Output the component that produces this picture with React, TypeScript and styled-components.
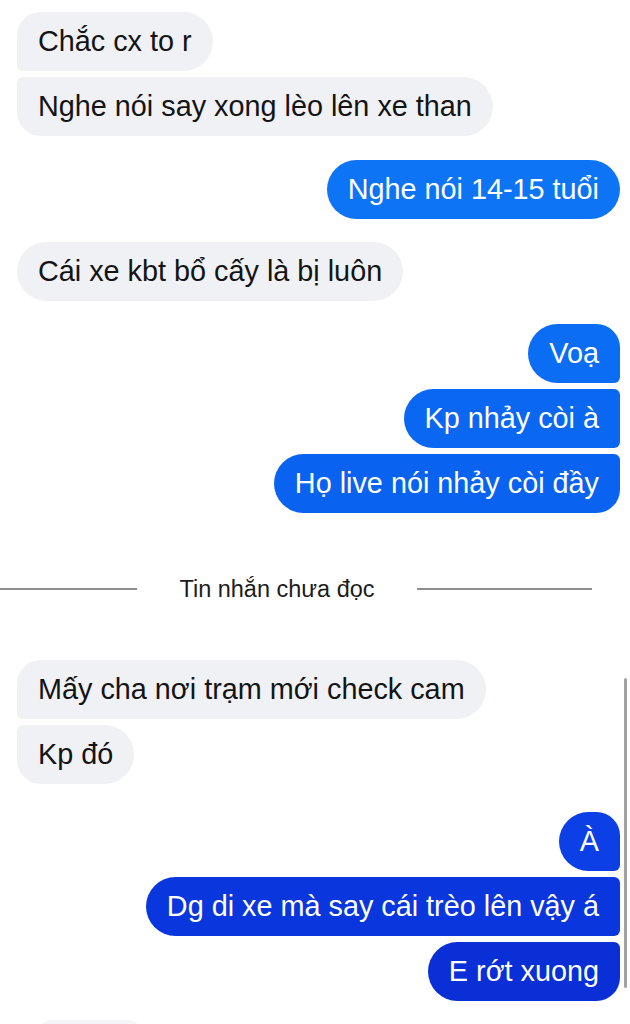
import React from "react";
import styled, { createGlobalStyle } from "styled-components";

const Global = createGlobalStyle`
  html, body { margin: 0; padding: 0; background: #ffffff; }
  body { font-family: "Liberation Sans", Arial, sans-serif; -webkit-font-smoothing: antialiased; }
`;

const Screen = styled.div`
  position: relative;
  width: 630px;
  height: 1024px;
  overflow: hidden;
  background: #ffffff;
  padding-top: 12px;
  box-sizing: border-box;
`;

const Group = styled.div<{ $side: "in" | "out"; $top: number }>`
  display: flex;
  flex-direction: column;
  align-items: ${(p) => (p.$side === "in" ? "flex-start" : "flex-end")};
  gap: 6px;
  padding: 0 10px 0 17px;
  margin-top: ${(p) => p.$top}px;
`;

type Pos = "single" | "first" | "middle" | "last";

const radius = (side: "in" | "out", pos: Pos) => {
  const full = 30;
  const outer = 24;
  const inner = 6;
  let a = full, b = full; // grouped-side top, bottom
  if (pos === "first") { a = outer; b = inner; }
  if (pos === "middle") { a = inner; b = inner; }
  if (pos === "last") { a = inner; b = outer; }
  if (side === "in") return `${a}px ${full}px ${full}px ${b}px`;
  return `${full}px ${a}px ${b}px ${full}px`;
};

const Bubble = styled.div<{ $side: "in" | "out"; $pos: Pos; $bg: string }>`
  box-sizing: border-box;
  height: 59px;
  display: flex;
  align-items: center;
  padding: 0 21px 1px 21px;
  font-size: 28.8px;
  white-space: nowrap;
  background: ${(p) => p.$bg};
  color: ${(p) => (p.$side === "in" ? "#141414" : "#ffffff")};
  border-radius: ${(p) => radius(p.$side, p.$pos)};
`;

const Divider = styled.div`
  display: flex;
  align-items: center;
  margin-top: 62px;
  margin-bottom: 57px;
  padding-right: 38px;
  height: 28px;
`;

const Line = styled.div<{ $w: number }>`
  width: ${(p) => p.$w}px;
  height: 2px;
  background: #8e8e8e;
`;

const DividerText = styled.span`
  flex: 1;
  text-align: center;
  font-size: 23.5px;
  color: #1c1c1c;
`;

const Scrollbar = styled.div`
  position: absolute;
  left: 624px;
  top: 678px;
  width: 3px;
  height: 310px;
  border-radius: 2px;
  background: #a3a3a3;
`;

const Peek = styled.div`
  position: absolute;
  left: 38px;
  top: 1020px;
  width: 104px;
  height: 30px;
  border-radius: 14px;
  background: #f4f5f7;
`;

const GRAY = "#eff1f4";

type Msg = { t: string; bg?: string };
type G = { side: "in" | "out"; top: number; msgs: Msg[] };

const groups1: G[] = [
  { side: "in", top: 0, msgs: [{ t: "Chắc cx to r" }, { t: "Nghe nói say xong lèo lên xe than" }] },
  { side: "out", top: 24, msgs: [{ t: "Nghe nói 14-15 tuổi", bg: "#0d74f6" }] },
  { side: "in", top: 23, msgs: [{ t: "Cái xe kbt bổ cấy là bị luôn" }] },
  {
    side: "out",
    top: 23,
    msgs: [
      { t: "Voạ", bg: "#0b6cf4" },
      { t: "Kp nhảy còi à", bg: "#0a67f2" },
      { t: "Họ live nói nhảy còi đầy", bg: "#0a62f0" },
    ],
  },
];

const groups2: G[] = [
  { side: "in", top: 0, msgs: [{ t: "Mấy cha nơi trạm mới check cam" }, { t: "Kp đó" }] },
  {
    side: "out",
    top: 28,
    msgs: [
      { t: "À", bg: "#0d3fe6" },
      { t: "Dg di xe mà say cái trèo lên vậy á", bg: "#0a36de" },
      { t: "E rớt xuong", bg: "#0a2fd6" },
    ],
  },
];

const posOf = (i: number, n: number): Pos =>
  n === 1 ? "single" : i === 0 ? "first" : i === n - 1 ? "last" : "middle";

const renderGroups = (gs: G[]) =>
  gs.map((g, gi) => (
    <Group key={gi} $side={g.side} $top={g.top}>
      {g.msgs.map((m, i) => (
        <Bubble key={i} $side={g.side} $pos={posOf(i, g.msgs.length)} $bg={m.bg ?? GRAY}>
          {m.t}
        </Bubble>
      ))}
    </Group>
  ));

export default function App() {
  return (
    <>
      <Global />
      <Screen>
        {renderGroups(groups1)}
        <Divider>
          <Line $w={137} />
          <DividerText>Tin nhắn chưa đọc</DividerText>
          <Line $w={175} />
        </Divider>
        {renderGroups(groups2)}
        <Scrollbar />
        <Peek />
      </Screen>
    </>
  );
}
